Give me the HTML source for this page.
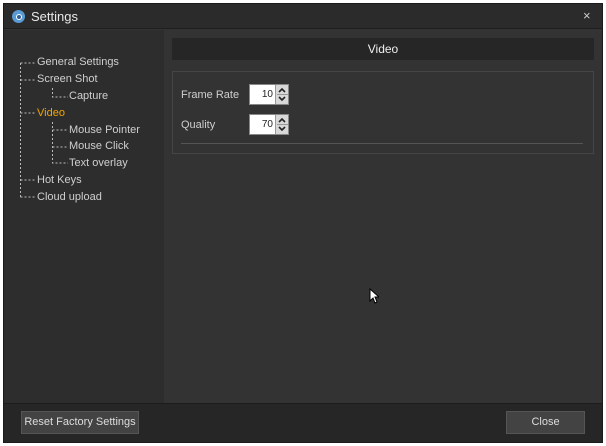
<!DOCTYPE html>
<html><head><style>
*{margin:0;padding:0;box-sizing:border-box}
body{width:606px;height:446px;background:#fff;position:relative;overflow:hidden;font-family:"Liberation Sans",sans-serif}
.win{position:absolute;left:3px;top:3px;width:600px;height:440px;background:#333;border:1px solid #1a1a1a}
.title{position:absolute;left:0;top:0;width:598px;height:25px;background:#2b2b2b;border-bottom:1px solid #1e1e1e;color:#e8e8e8;font-size:13px}
.left{position:absolute;left:0;top:26px;width:160px;height:373px;background:#2d2d2d}
.t{position:absolute;color:#cfcfcf;font-size:11px;white-space:nowrap}
.foot{position:absolute;left:0;top:399px;width:598px;height:39px;background:#262626;border-top:1px solid #1c1c1c}
.btn{position:absolute;background:#434343;border:1px solid #555;color:#ddd;font-size:11px;text-align:center;line-height:21px}
.sp{position:absolute;width:40px;height:21px;background:#fff;border:1px solid #888}
.sp span{position:absolute;right:15px;top:4px;font-size:10px;color:#222}
.arr{position:absolute;right:0;top:0;width:13px;height:19px;background:#d8d8d8;border-left:1px solid #999}
</style></head><body>
<div class="win">
 <div class="title">
  <div style="position:absolute;left:8px;top:6px;width:13px;height:13px;border-radius:50%;background:#5b9bd5"></div>
  <div style="position:absolute;left:11.5px;top:9.5px;width:6px;height:6px;border-radius:50%;border:1.5px solid #fff;background:#2f5f99"></div>
  <div style="position:absolute;left:27px;top:5px">Settings</div>
  <div style="position:absolute;left:579px;top:4px;color:#ccc;font-size:13px">×</div>
 </div>
 <div class="left">
  <svg width="160" height="180" style="position:absolute;left:0;top:0" stroke="#bbb" stroke-dasharray="2,2" fill="none">
   <path d="M16.5 33 V167 M16.5 33 H32 M16.5 50 H32 M16.5 83 H32 M16.5 150 H32 M16.5 167 H32"/>
   <path d="M48.5 58 V67 H64 M48.5 92 V133 H64 M48.5 100 H64 M48.5 117 H64"/>
  </svg>
  <div class="t" style="left:33px;top:26px">General Settings</div>
  <div class="t" style="left:33px;top:43px">Screen Shot</div>
  <div class="t" style="left:65px;top:60px">Capture</div>
  <div class="t" style="left:33px;top:77px;color:#f0a500">Video</div>
  <div class="t" style="left:65px;top:94px">Mouse Pointer</div>
  <div class="t" style="left:65px;top:110px">Mouse Click</div>
  <div class="t" style="left:65px;top:127px">Text overlay</div>
  <div class="t" style="left:33px;top:144px">Hot Keys</div>
  <div class="t" style="left:33px;top:161px">Cloud upload</div>
 </div>
 <div style="position:absolute;left:168px;top:34px;width:422px;height:22px;background:#262626;color:#eee;font-size:12px;text-align:center;line-height:22px">Video</div>
 <div style="position:absolute;left:168px;top:67px;width:422px;height:83px;border:1px solid #454545">
  <div class="t" style="left:8px;top:17px">Frame Rate</div>
  <div class="t" style="left:8px;top:47px">Quality</div>
  <div class="sp" style="left:76px;top:12px"><span>10</span><div class="arr"><svg width="12" height="19"><path d="M3 7 L6 4 L9 7 M3 12 L6 15 L9 12" stroke="#222" stroke-width="1.6" fill="none"/><path d="M1 9.5 H12" stroke="#999"/></svg></div></div>
  <div class="sp" style="left:76px;top:42px"><span>70</span><div class="arr"><svg width="12" height="19"><path d="M3 7 L6 4 L9 7 M3 12 L6 15 L9 12" stroke="#222" stroke-width="1.6" fill="none"/><path d="M1 9.5 H12" stroke="#999"/></svg></div></div>
  <div style="position:absolute;left:8px;top:71px;width:402px;height:1px;background:#555"></div>
 </div>
 <div class="foot">
  <div class="btn" style="left:17px;top:7px;width:118px;height:23px">Reset Factory Settings</div>
  <div class="btn" style="left:502px;top:7px;width:79px;height:23px">Close</div>
 </div>
 <svg style="position:absolute;left:365px;top:284px" width="10" height="16"><path d="M1 1 V13 L4 10 L6 15 L8 14 L6 9 H10 Z" fill="#fff" stroke="#000"/></svg>
</div>
</body></html>
